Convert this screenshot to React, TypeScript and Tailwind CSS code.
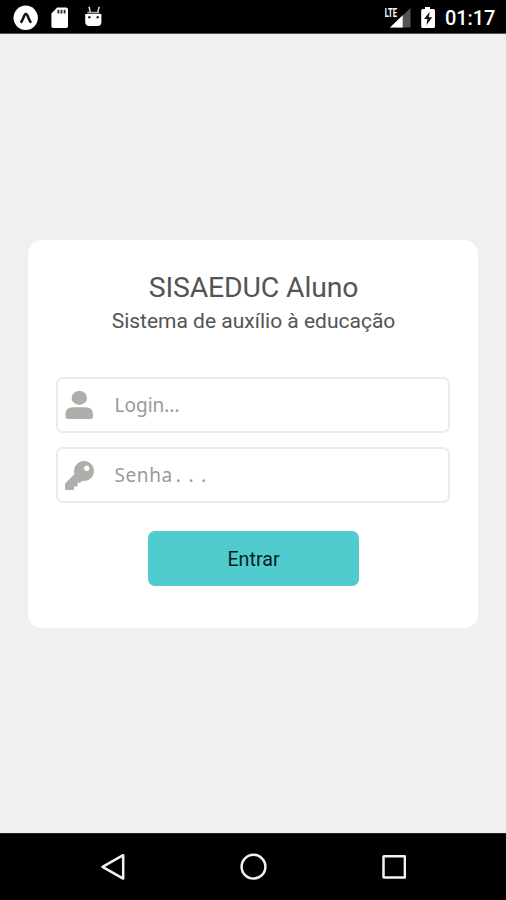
import React from "react";

function StatusBar() {
  return (
    <header className="flex h-[34px] shrink-0 items-center border-b border-[#555] bg-black pl-[13px] pr-[11px] text-white">
      <svg width="94" height="34" viewBox="0 0 94 34" fill="none">
        <circle cx="12.7" cy="17.8" r="12.2" fill="#fff" />
        <path d="M8.3 21.8C10.4 19.4 11 14 12.9 14S15.4 19.4 17.5 21.8" stroke="#111" strokeWidth="2.6" strokeLinecap="round" />
        <path d="M44.2 7.6H53.2Q55 7.6 55 9.4V26.3Q55 28.1 53.2 28.1H40.2Q38.4 28.1 38.4 26.3V13.4Z" fill="#fff" />
        <path d="M45.4 9.8V13.4M48.5 9.8V13.4M51.6 9.8V13.4" stroke="#333" strokeWidth="1.9" />
        <path d="M72.2 14H88.4V22Q88.4 26 84.4 26H76.2Q72.2 26 72.2 22Z" fill="#fff" />
        <path d="M76 6.8L77.4 12.6M86.2 6.8L84.6 12.6" stroke="#ddd" strokeWidth="1.5" />
        <path d="M74.4 12.6H86.4" stroke="#aaa" strokeWidth="1.8" />
        <circle cx="76.3" cy="17.3" r="1.2" fill="#222" />
        <circle cx="84.7" cy="17.3" r="1.2" fill="#222" />
      </svg>
      <div className="ml-auto flex items-center">
        <svg width="54" height="34" viewBox="0 0 54 34">
          <path d="M26.5 8V27.5H6Z" fill="#555" />
          <path d="M0 6H14V18H0Z" fill="#000" />
          <path d="M18.7 15.2V27.5H6Z" fill="#fff" />
          <g transform="translate(0.8 17.2) scale(0.56 1)">
            <text fill="#fff" fontFamily="Roboto, sans-serif" fontWeight="700" fontSize="13.6">LTE</text>
          </g>
          <path d="M41 7H46V9H49.4Q51 9 51 10.6V26.4Q51 28 49.4 28H38.8Q37.2 28 37.2 26.4V10.6Q37.2 9 38.8 9H41Z" fill="#fff" />
          <path d="M45.7 11.8L40 19H43.4L42.5 25L48.3 17.3H44.8Z" fill="#111" />
        </svg>
        <span className="ml-[7px] w-[50px] whitespace-nowrap pt-[3px] font-['Roboto',sans-serif] text-[20px] font-medium leading-[32px] tracking-[-0.1px]">
          01:17
        </span>
      </div>
    </header>
  );
}

function UserIcon() {
  return (
    <svg width="29" height="29" viewBox="0 0 29 29" fill="currentColor">
      <ellipse cx="14.3" cy="6.9" rx="7.7" ry="7" />
      <path d="M8 16.2H20.6Q28 16.2 28 23.4V25.8Q28 28 25.6 28H2.7Q0.4 28 0.4 25.8V23.4Q0.4 16.2 8 16.2Z" />
    </svg>
  );
}

function KeyIcon() {
  return (
    <svg width="29" height="29" viewBox="0 0 512 512" fill="currentColor">
      <path d="M512 176.001C512 273.203 433.202 352 336 352c-11.22 0-22.19-1.062-32.827-3.069l-24.012 27.014A23.999 23.999 0 0 1 261.223 384H224v40c0 13.255-10.745 24-24 24h-40v40c0 13.255-10.745 24-24 24H24c-13.255 0-24-10.745-24-24v-78.059c0-6.365 2.529-12.47 7.029-16.971l161.802-161.802C163.108 213.814 160 195.271 160 176 160 78.798 238.797.001 335.999 0 433.488-.001 512 78.511 512 176.001zM336 128c0 26.51 21.49 48 48 48s48-21.49 48-48-21.49-48-48-48-48 21.49-48 48z" />
    </svg>
  );
}

function Field({ icon, children }: { icon: React.ReactNode; children: React.ReactNode }) {
  return (
    <div className="flex h-14 items-center rounded-[7px] border-2 border-[#ebebeb] pl-[7px] text-[#999]">
      <span className="text-[#b0aeab]">{icon}</span>
      <span className="ml-[20.5px] whitespace-nowrap font-['Noto_Sans',sans-serif] text-[19px] leading-7">{children}</span>
    </div>
  );
}

function NavBar() {
  return (
    <nav className="flex h-[67px] shrink-0 items-center justify-center border-t border-[#222] bg-black">
      <svg width="306" height="30" viewBox="0 0 306 30" fill="none" stroke="#f2f2f2" strokeWidth="2.5" strokeLinejoin="round">
        <path d="M2.5 14.8L23.2 3.2V26.6Z" />
        <circle cx="153.5" cy="14.7" r="11.9" />
        <rect x="283.5" y="4.2" width="21.4" height="21.4" rx="0.5" />
      </svg>
    </nav>
  );
}

export default function App() {
  return (
    <div className="flex h-[900px] w-[506px] flex-col overflow-hidden bg-[#f0f0f0] font-['Roboto',sans-serif]">
      <StatusBar />
      <main className="flex flex-1 flex-col items-center pt-[206px]">
        <section className="flex h-[388px] w-[450px] flex-col items-center rounded-[14px] bg-white px-7 pt-[30px]">
          <h1 className="whitespace-nowrap pl-px text-[28.4px] leading-9 tracking-[-0.15px] text-[#545454]">SISAEDUC Aluno</h1>
          <h2 className="whitespace-nowrap pl-px text-[21px] leading-[30px] text-[#545454]">Sistema de auxílio à educação</h2>
          <form className="mt-[41px] flex w-full flex-col gap-[14px]">
            <Field icon={<UserIcon />}>Login...</Field>
            <Field icon={<KeyIcon />}>
              <span className="tracking-[0.6px]">Senha</span>
              <span className="ml-[3px] tracking-[7.5px]">...</span>
            </Field>
            <button type="button" className="mt-[14px] h-[55px] w-[211px] self-center rounded-[7px] bg-[#50cbce] pl-px pt-[2px] text-[19.7px] text-[#071d20]">
              Entrar
            </button>
          </form>
        </section>
      </main>
      <NavBar />
    </div>
  );
}
